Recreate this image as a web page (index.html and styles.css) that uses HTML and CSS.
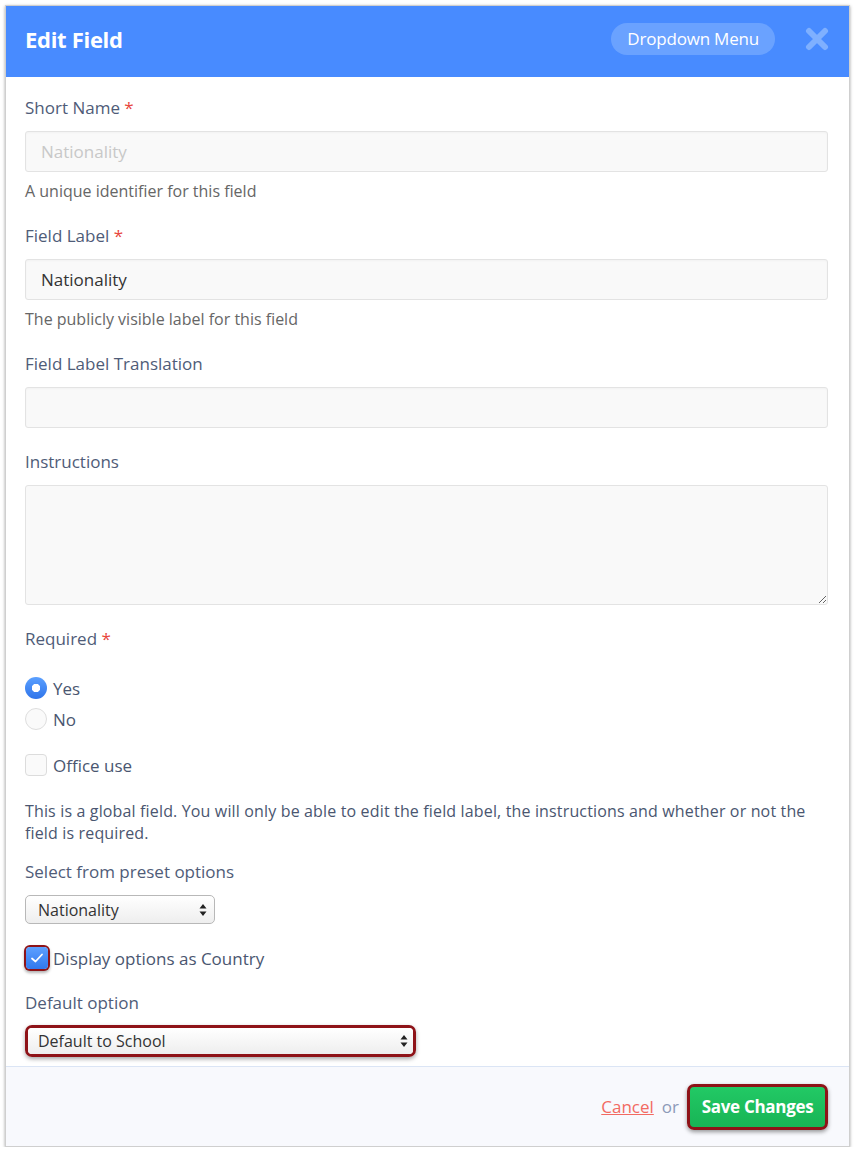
FILE: index.html
```html
<!DOCTYPE html>
<html>
<head>
<meta charset="utf-8">
<link rel="stylesheet" href="styles.css">
</head>
<body>
<div class="modal">
  <div class="header">
    <h1 class="title">Edit Field</h1>
    <div class="header-right">
      <span class="pill">Dropdown Menu</span>
      <svg class="close" width="26" height="24" viewBox="0 0 26 24"><path d="M5 4 L21 20 M21 4 L5 20" stroke="#7fb0ff" stroke-width="6" stroke-linecap="round"/></svg>
    </div>
  </div>
  <div class="form">
    <div class="group">
      <label class="label">Short Name <span class="req">*</span></label>
      <div class="input disabled">Nationality</div>
      <div class="help">A unique identifier for this field</div>
    </div>
    <div class="group">
      <label class="label">Field Label <span class="req">*</span></label>
      <div class="input">Nationality</div>
      <div class="help">The publicly visible label for this field</div>
    </div>
    <div class="group">
      <label class="label">Field Label Translation</label>
      <div class="input"></div>
    </div>
    <div class="group">
      <label class="label">Instructions</label>
      <textarea class="textarea"></textarea>
    </div>
    <div class="group g-req">
      <label class="label">Required <span class="req">*</span></label>
      <div class="radios">
        <div class="opt"><span class="radio checked"></span><span>Yes</span></div>
        <div class="opt"><span class="radio"></span><span>No</span></div>
      </div>
    </div>
    <div class="group g-office">
      <div class="opt"><span class="check"></span><span>Office use</span></div>
    </div>
    <p class="note">This is a global field. You will only be able to edit the field label, the instructions and whether or not the field is required.</p>
    <div class="group">
      <label class="label">Select from preset options</label>
      <div class="select small"><span>Nationality</span><svg width="8" height="14" viewBox="0 0 8 14"><path d="M4 1 L7.5 5.5 H0.5 Z M4 13 L7.5 8.5 H0.5 Z" fill="#222"/></svg></div>
    </div>
    <div class="group">
      <div class="opt"><span class="check on"><svg width="14" height="12" viewBox="0 0 14 12"><path d="M2 6.5 L5.5 9.5 L12 2.5" fill="none" stroke="#fff" stroke-width="1.8" stroke-linecap="round" stroke-linejoin="round"/></svg></span><span class="tight">Display options as Country</span></div>
    </div>
    <div class="group last">
      <label class="label lb2">Default option</label>
      <div class="hl-wrap">
        <div class="select wide"><span>Default to School</span><svg width="8" height="14" viewBox="0 0 8 14"><path d="M4 1 L7.5 5.5 H0.5 Z M4 13 L7.5 8.5 H0.5 Z" fill="#222"/></svg></div>
      </div>
    </div>
  </div>
  <div class="footer">
    <a class="cancel" href="#">Cancel</a>
    <span class="or">or</span>
    <button class="save">Save Changes</button>
  </div>
</div>
</body>
</html>
```
FILE: styles.css
```css
* { box-sizing: border-box; }
body {
  margin: 0;
  background: #fff;
  font-family: "Open Sans", "Noto Sans", sans-serif;
}
.modal {
  margin: 5px 5px 0 5px;
  width: 845px;
  border: 1px solid #cfcfcf;
  box-shadow: 0 1px 3px rgba(0,0,0,0.35);
  background: #fff;
}
.header {
  height: 71px;
  background: #488bff;
  display: flex;
  align-items: center;
  justify-content: space-between;
  padding: 0 19px 6px 19px;
}
.title {
  margin: 0;
  color: #fff;
  font-size: 22px;
  font-weight: 700;
  letter-spacing: -0.3px;
}
.header-right {
  display: flex;
  align-items: center;
  gap: 29px;
}
.pill {
  height: 32px;
  padding: 0 16px;
  border-radius: 16px;
  background: #6aa2ff;
  color: #fff;
  font-size: 17px;
  display: flex;
  align-items: center;
  letter-spacing: -0.2px;
}
.close { display: block; margin-top: 1px; }
.form {
  padding: 20px 21px 9px 19px;
  color: #4f5c78;
}
.group { margin-bottom: 23px; }
.group.g-req { margin-bottom: 24px; }
.group.g-office { margin-bottom: 24px; }
.group.last { margin-bottom: 0; }
.label {
  display: block;
  font-size: 17px;
  line-height: 22px;
  color: #4f5c78;
  margin-bottom: 12px;
}
.lb2 { margin-bottom: 11px; }
.req { color: #e8463c; }
.input {
  height: 41px;
  border: 1px solid #e3e3e3;
  border-radius: 3px;
  background: #f9f9f9;
  padding: 0 15px;
  display: flex;
  align-items: center;
  font-size: 17px;
  color: #333;
  box-shadow: inset 0 1px 2px rgba(0,0,0,0.03);
}
.input.disabled { color: #c8c8c8; }
.help {
  margin-top: 8px;
  font-size: 16px;
  line-height: 22px;
  color: #666;
}
.textarea {
  display: block;
  width: 100%;
  height: 120px;
  border: 1px solid #e3e3e3;
  border-radius: 3px;
  background: #f9f9f9;
  resize: vertical;
  font-family: inherit;
  margin: 0;
}
.radios {
  margin-top: 27px;
  display: flex;
  flex-direction: column;
  gap: 9px;
}
.opt {
  display: flex;
  align-items: center;
  gap: 6px;
  height: 22px;
  font-size: 17px;
  color: #4a5670;
}
.radio {
  width: 22px;
  height: 22px;
  border-radius: 50%;
  border: 1px solid #dedede;
  background: #fafafa;
  display: inline-block;
}
.radio.checked {
  border: none;
  background: radial-gradient(circle, #fff 0 4px, transparent 4.5px), linear-gradient(#5ba0ff, #2f74ea);
}
.check {
  width: 22px;
  height: 22px;
  border-radius: 4px;
  border: 1px solid #dcdcdc;
  background: #fafafa;
  display: inline-flex;
  align-items: center;
  justify-content: center;
}
.check.on {
  background: linear-gradient(#5da0ff, #3178ee);
  border: none;
  box-shadow: 0 0 0 2px #8e1318, 0 2px 3px 2px rgba(0,0,0,0.3);
  margin-left: 1px;
}
.tight { margin-left: -1px; }
.note {
  margin: 0 0 17px 0;
  font-size: 16px;
  line-height: 22px;
  color: #4a5670;
  letter-spacing: 0.15px;
}
.select {
  display: flex;
  align-items: center;
  justify-content: space-between;
  border: 1px solid #b8b8b8;
  border-radius: 5px;
  background: linear-gradient(#ffffff, #eeeeee);
  font-size: 16px;
  color: #333;
  padding: 0 7px 0 12px;
}
.select.small { width: 190px; height: 29px; }
.hl-wrap {
  width: 391px;
  border: 3px solid #8e1318;
  border-radius: 7px;
  box-shadow: 0 2px 4px rgba(0,0,0,0.35);
}
.select.wide {
  height: 26px;
  border: none;
  border-radius: 4px;
  padding: 0 5px 0 10px;
}
.footer {
  height: 80px;
  background: #f8f9fd;
  border-top: 1px solid #dbe5f5;
  display: flex;
  align-items: center;
  justify-content: flex-end;
  padding: 0 21px 0 19px;
}
.cancel {
  color: #f26a62;
  font-size: 17px;
  text-decoration: underline;
}
.or {
  color: #8d9ab8;
  font-size: 17px;
  margin: 0 8px 0 8px;
}
.save {
  width: 141px;
  height: 46px;
  border: 3px solid #8e1318;
  border-radius: 7px;
  background: linear-gradient(#22c965, #18b455);
  color: #fff;
  font-family: inherit;
  font-weight: 700;
  font-size: 17px;
  letter-spacing: -0.3px;
  box-shadow: 0 2px 4px rgba(0,0,0,0.4);
  padding: 0;
}
```
